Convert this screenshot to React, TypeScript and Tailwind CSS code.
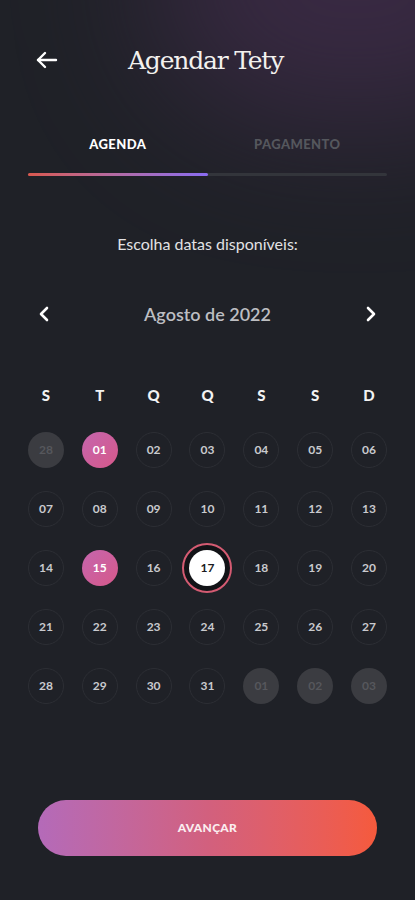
import React from 'react';

type Day = { label: string; kind: 'muted' | 'normal' | 'picked' | 'current' };

const weekdays = ['S', 'T', 'Q', 'Q', 'S', 'S', 'D'];

function buildDays(): Day[] {
    const days: Day[] = [{ label: '28', kind: 'muted' }];
    for (let d = 1; d <= 31; d++) {
        const label = d < 10 ? `0${d}` : `${d}`;
        let kind: Day['kind'] = 'normal';
        if (d === 1 || d === 15) kind = 'picked';
        if (d === 17) kind = 'current';
        days.push({ label, kind });
    }
    ['01', '02', '03'].forEach(l => days.push({ label: l, kind: 'muted' }));
    return days;
}

function DayCell({ day }: { day: Day }) {
    if (day.kind === 'current') {
        return (
            <div className="flex h-[59px] items-center justify-center">
                <div className="flex h-[50px] w-[50px] items-center justify-center rounded-full border-2 border-[#d45b72] bg-[#121317]">
                    <div className="flex h-[36px] w-[36px] items-center justify-center rounded-full bg-white text-[12px] font-bold text-[#1a1b20]">
                        {day.label}
                    </div>
                </div>
            </div>
        );
    }
    const styles = {
        muted: 'bg-[#3b3c41] text-[#56575c]',
        normal: 'border border-[#2c2e34] text-[#c9cace]',
        picked: 'bg-gradient-to-br from-[#c565ad] to-[#d6588a] text-white',
    }[day.kind];
    return (
        <div className="flex h-[59px] items-center justify-center">
            <div className={`flex h-[36px] w-[36px] items-center justify-center rounded-full text-[12px] font-bold ${styles}`}>
                {day.label}
            </div>
        </div>
    );
}

export default function App() {
    const days = buildDays();

    return (
        <div
            className="relative flex h-[900px] w-[415px] flex-col overflow-hidden bg-[#1f2127] text-white"
            style={{ fontFamily: 'Lato, "Open Sans", sans-serif' }}
        >
            {/* purple glow top right */}
            <div className="pointer-events-none absolute -right-[140px] -top-[160px] h-[280px] w-[400px] rounded-full bg-[#4a2f55] opacity-60 blur-[70px]" />

            <div className="relative flex flex-col">
                {/* header */}
                <div className="mt-[44px] flex h-[32px] items-center px-[36px]">
                    <svg width="22" height="18" viewBox="0 0 22 18" fill="none" stroke="white" strokeWidth="2.4" strokeLinecap="round" strokeLinejoin="round">
                        <path d="M20 9H2" />
                        <path d="M9 2L2 9l7 7" />
                    </svg>
                    <h1
                        className="ml-[70px] text-[25px] leading-none text-[#f3f1ee]"
                        style={{ fontFamily: '"DejaVu Serif", "Liberation Serif", serif', letterSpacing: '-1.2px' }}
                    >
                        Agendar Tety
                    </h1>
                </div>

                {/* tabs */}
                <div className="mt-[59px] grid grid-cols-2 px-[28px]">
                    <div className="text-center text-[13px] font-black tracking-[0.4px] text-white">AGENDA</div>
                    <div className="text-center text-[13px] font-black tracking-[0.4px] text-[#55575d]">PAGAMENTO</div>
                </div>
                <div className="mx-[28px] mt-[18px] flex h-[3px] rounded-full bg-[#33353b]">
                    <div className="h-full w-1/2 rounded-full bg-gradient-to-r from-[#d9584e] to-[#8a6bf2]" />
                </div>

                <p className="mt-[56px] text-center text-[16px] text-[#e2e2e4]">Escolha datas disponíveis:</p>

                {/* month nav */}
                <div className="mt-[45px] flex items-center justify-between px-[38px]">
                    <svg width="12" height="16" viewBox="0 0 12 16" fill="none" stroke="white" strokeWidth="2.6" strokeLinecap="round" strokeLinejoin="round">
                        <path d="M9 2L3 8l6 6" />
                    </svg>
                    <span className="text-[18px] font-semibold text-[#bdbec2]">Agosto de 2022</span>
                    <svg width="12" height="16" viewBox="0 0 12 16" fill="none" stroke="white" strokeWidth="2.6" strokeLinecap="round" strokeLinejoin="round">
                        <path d="M3 2l6 6-6 6" />
                    </svg>
                </div>

                {/* calendar */}
                <div className="mt-[56px] grid grid-cols-7 px-[19px]">
                    {weekdays.map((w, i) => (
                        <div key={i} className="text-center text-[15px] font-black text-[#f2f2f2]">{w}</div>
                    ))}
                </div>
                <div className="mt-[14px] grid grid-cols-7 px-[19px]">
                    {days.map((d, i) => (
                        <DayCell key={i} day={d} />
                    ))}
                </div>
            </div>

            {/* button */}
            <div className="relative mt-auto px-[38px] pb-[44px]">
                <button className="flex h-[56px] w-full items-center justify-center rounded-full bg-gradient-to-r from-[#b46ab9] via-[#d2607e] to-[#f55a3c] text-[12px] font-black tracking-[0.3px] text-[#fbeef0]">
                    AVANÇAR
                </button>
            </div>
        </div>
    );
}
